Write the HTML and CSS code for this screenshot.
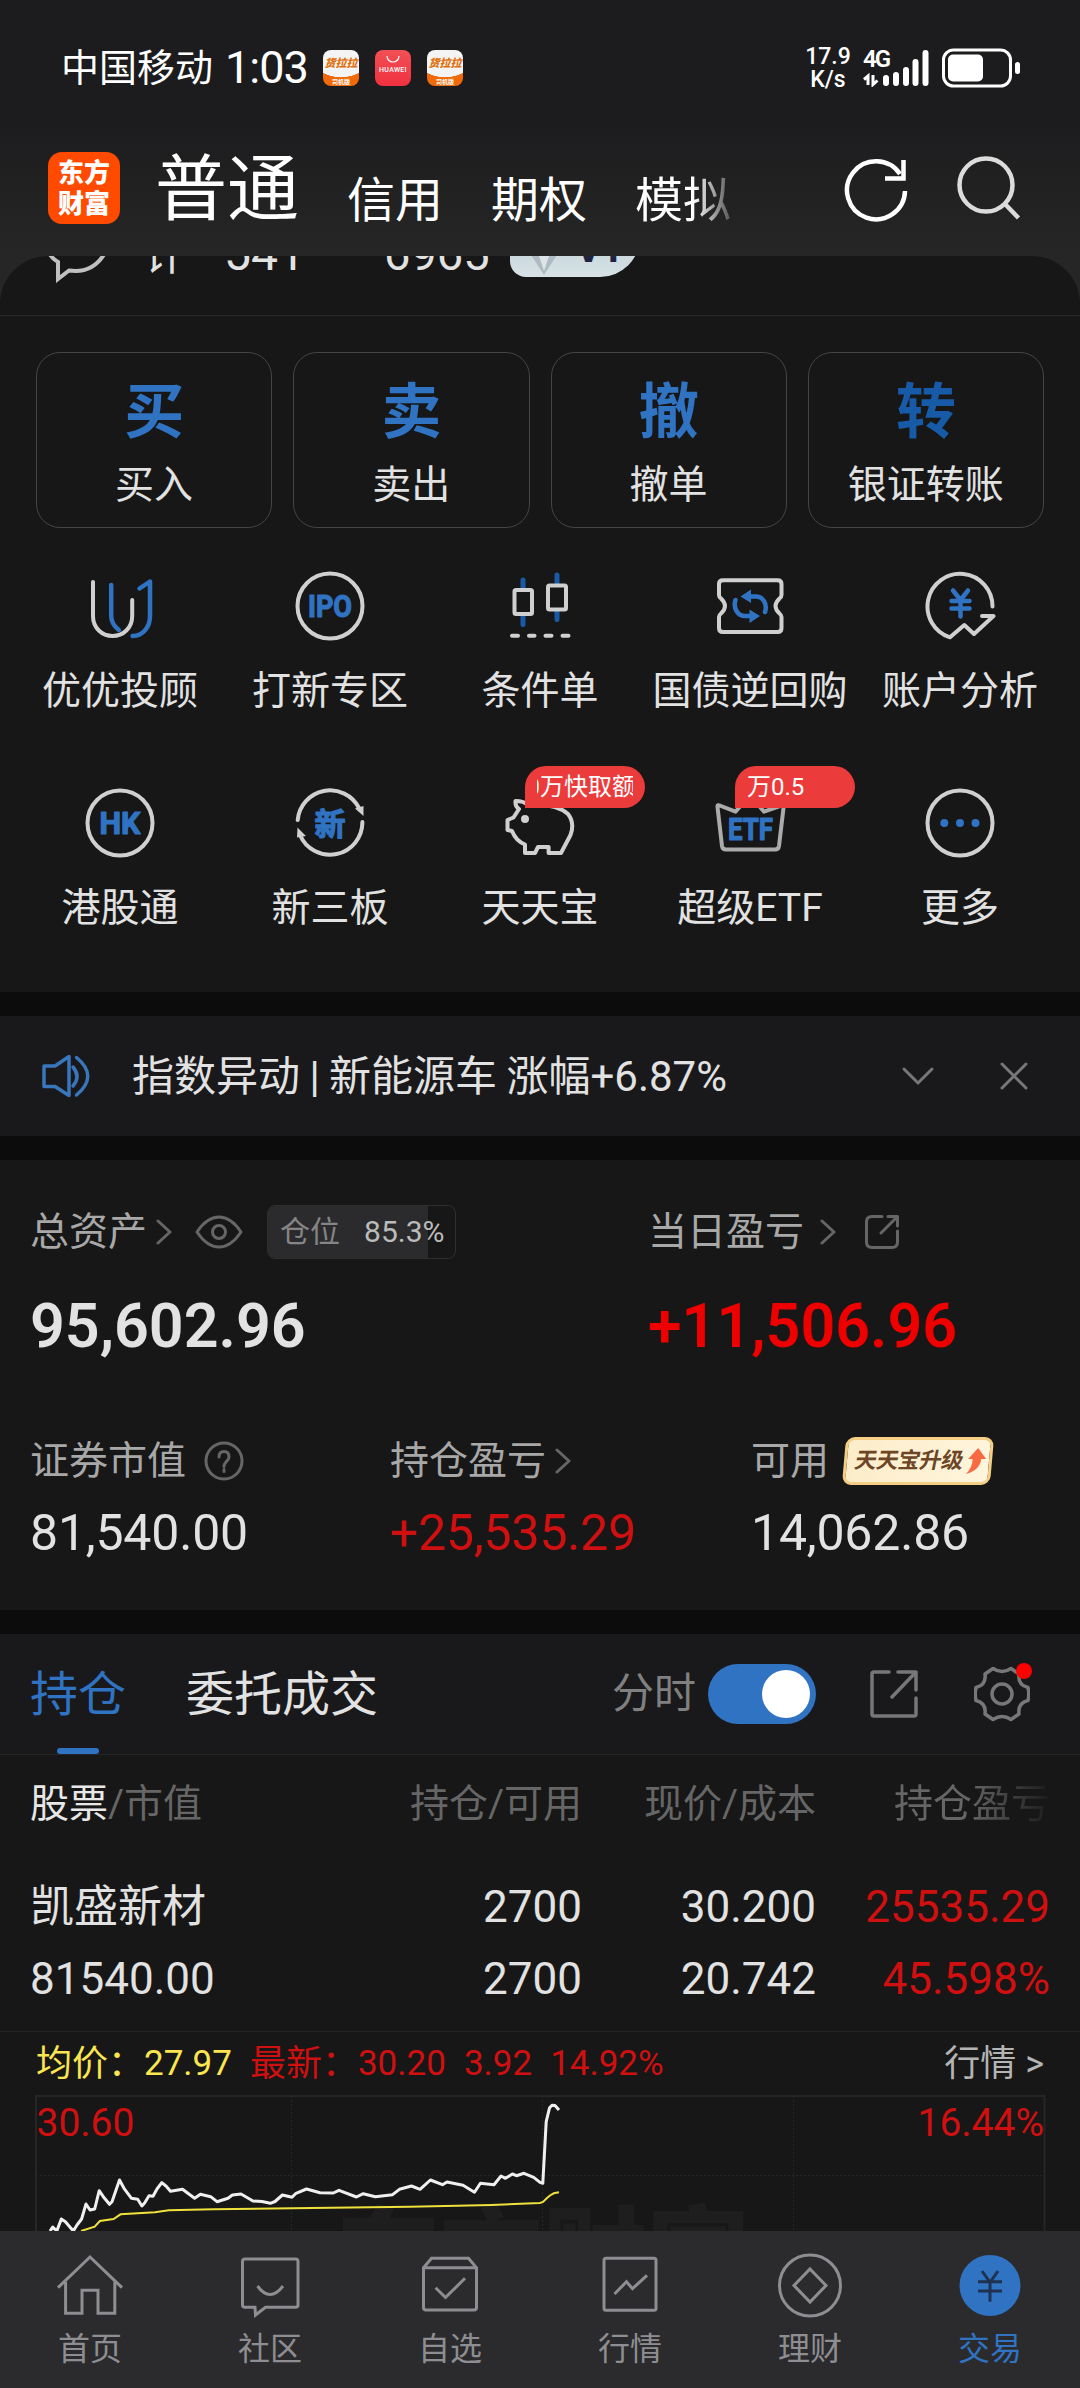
FILE: index.html
```html
<!DOCTYPE html>
<html lang="zh-CN">
<head>
    <meta charset="UTF-8">
    <meta name="viewport" content="width=device-width, initial-scale=1.0">
    <title>交易</title>
    <link rel="stylesheet" href="styles.css">
</head>
<body>
    <div class="page">
        <header class="header">
            <div class="status">
                <span class="carrier">中国移动</span>
                <span class="clock">1:03</span>
                <div class="app app-hll"><b>货拉拉</b><i>司机版</i></div>
                <div class="app app-hw">
                    <svg width="16" height="9" viewBox="0 0 16 9"><path d="M2 1a6 6 0 0 0 12 0" fill="none" stroke="#fff" stroke-width="1.2"/></svg>
                    <span>HUAWEI</span>
                </div>
                <div class="app app-hll"><b>货拉拉</b><i>司机版</i></div>
                <div class="speed"><span>17.9</span><span>K/s</span></div>
                <div class="signal">
                    <span>4G</span>
                    <svg width="66" height="38" viewBox="0 0 66 38" fill="none" stroke="#fff" stroke-linecap="round">
                        <path d="M5 36V27L1 30.500M10 26v9.500L14.500 31.500" stroke-width="3" stroke-linecap="butt"/>
                        <path d="M23 29v5M33 26v8M43 21v13M52.500 13v21M62.500 4v30" stroke-width="6"/>
                    </svg>
                </div>
                <svg class="battery" width="80" height="40" viewBox="0 0 80 40">
                    <rect x="1.500" y="2" width="67" height="36" rx="10" fill="none" stroke="#fff" stroke-width="3"/>
                    <rect x="6" y="6.500" width="35" height="27" rx="5" fill="#fff"/>
                    <rect x="73" y="14" width="5" height="12" rx="2.500" fill="#fff"/>
                </svg>
            </div>
            <div class="nav">
                <div class="logo">东方<br>财富</div>
                <div class="nav-tabs">
                    <span class="nav-tab active">普通</span>
                    <span class="nav-tab">信用</span>
                    <span class="nav-tab">期权</span>
                    <span class="nav-tab fade">模拟</span>
                </div>
                <svg class="refresh" width="68" height="68" viewBox="0 0 68 68" fill="none" stroke="#fff" stroke-width="4.500">
                    <path d="M63 36A29 29 0 1 1 58 19"/>
                    <path d="M61.500 5V23.500H43"/>
                </svg>
                <svg class="search" width="68" height="68" viewBox="0 0 68 68" fill="none" stroke="#dcdcdc" stroke-width="4.500">
                    <circle cx="31" cy="30" r="26.500"/>
                    <path d="M50 49L63.500 63"/>
                </svg>
            </div>
        </header>

        <section class="panel">
            <div class="account">
                <svg class="bubble" width="64" height="40" viewBox="0 0 64 40" fill="none" stroke="#c0c0c0" stroke-width="4">
                    <path d="M2 8q3 7 10 11V36L23 27.500Q48 31 60 8"/>
                </svg>
                <span class="acc-name">计</span>
                <span class="acc-no">541</span>
                <span class="acc-no2">6965</span>
                <div class="vip">
                    <svg width="40" height="30" viewBox="0 0 40 30"><path d="M2 0h36L20 28z" fill="#aebbc2"/><path d="M12 0h16l-8 24z" fill="#dce4e8"/></svg>
                    <span>V1</span>
                </div>
            </div>

            <div class="cards">
                <div class="card"><b>买</b><span>买入</span></div>
                <div class="card"><b>卖</b><span>卖出</span></div>
                <div class="card"><b>撤</b><span>撤单</span></div>
                <div class="card card-deep"><b>转</b><span>银证转账</span></div>
            </div>

            <div class="menu">
                <div class="menu-item">
                    <svg class="ico" viewBox="0 0 72 72">
                        <path d="M9 12V46C9 58 18 66 28.600 66S48.200 58 48.200 46V30"/>
                        <path class="blue" d="M27.200 15V46q0 8 7.600 14M55.500 18.500L66 11.500V46C66 57 59 66 48.600 66"/>
                    </svg>
                    <span>优优投顾</span>
                </div>
                <div class="menu-item">
                    <svg class="ico" viewBox="0 0 72 72">
                        <circle cx="36" cy="36" r="32.500"/>
                        <text class="ico-text" x="36" y="47" textLength="44" lengthAdjust="spacingAndGlyphs">IPO</text>
                    </svg>
                    <span>打新专区</span>
                </div>
                <div class="menu-item">
                    <svg class="ico" viewBox="0 0 72 72">
                        <path class="deep" d="M19 10v8M19 46v8.500M53 5v8M53 41v8.500"/>
                        <rect x="10.500" y="20" width="17.500" height="24" rx="1.500"/>
                        <rect x="44" y="15.500" width="18" height="24" rx="1.500"/>
                        <path d="M8 65.700h6M25 65.700h5.500M41.500 65.700h6M58.500 65.700h6"/>
                    </svg>
                    <span>条件单</span>
                </div>
                <div class="menu-item">
                    <svg class="ico" viewBox="0 0 72 72">
                        <path d="M9 10.300H63.500Q67.500 10.300 67.500 14V25Q67.500 27 65.500 28.500Q57.500 36 65.500 43.500Q67.500 45 67.500 47V58Q67.500 62 63.500 62H9Q5 62 5 58V47Q5 45 7 43.500Q15 36 7 28.500Q5 27 5 25V14Q5 10.300 9 10.300z"/>
                        <path class="blue" d="M51 42Q53 36 50 31Q47 26.500 42 26.500H36M21.500 30Q19.500 36 22.500 41Q25.500 46 31 46H36"/>
                        <path class="blue-fill" d="M26.500 26.500L37 19.500V33zM46 46L35.500 39.500V53z"/>
                    </svg>
                    <span>国债逆回购</span>
                </div>
                <div class="menu-item">
                    <svg class="ico" viewBox="0 0 72 72">
                        <path d="M68.500 36.500A32.500 32.500 0 1 0 26 67.300L40.300 55L50 64L69.500 46H58"/>
                        <path class="blue" d="M29 20.500L36.500 30L44 20.500M36.500 30V46.500M27.500 31H45.500M27.500 38.500H45.500"/>
                    </svg>
                    <span>账户分析</span>
                </div>
                <div class="menu-item">
                    <svg class="ico" viewBox="0 0 72 72">
                        <circle cx="36" cy="36" r="32.500"/>
                        <text class="ico-text" x="36" y="47" textLength="41" lengthAdjust="spacingAndGlyphs">HK</text>
                    </svg>
                    <span>港股通</span>
                </div>
                <div class="menu-item">
                    <svg class="ico" viewBox="0 0 72 72">
                        <path d="M3.700 33A32.500 32.500 0 0 1 65 21M68.400 35A32.500 32.500 0 0 1 6 48"/>
                        <path class="light-fill" d="M61 21.500L69.500 19V29zM3.500 40.500L12 49L3 50.500z"/>
                        <text class="ico-text ico-cjk" x="36" y="47.500">新</text>
                    </svg>
                    <span>新三板</span>
                </div>
                <div class="menu-item">
                    <svg class="ico" viewBox="0 0 72 72">
                        <path d="M24 18Q20 14 11.500 14Q11 20 15 22L9.500 30.500L3.500 33V43L8 44Q12 54 21 57.500V66H31L34 60H44.600V66H57L66.500 48Q71 36 64 27Q52 16 24 18z"/>
                        <circle class="light-fill" cx="21" cy="32" r="4"/>
                    </svg>
                    <span>天天宝</span>
                    <div class="badge badge-scroll"><em>10万快取额</em></div>
                </div>
                <div class="menu-item">
                    <svg class="ico ico-dim" viewBox="0 0 72 72">
                        <path d="M7 19L21.500 24.700L36 8L50 24.700L66 19Q70 17 69.500 21L65 59Q64.500 62.500 61 62.500H12Q8.500 62.500 8 59L3.500 20Q3 17 7 19z"/>
                        <text class="ico-text" x="36.500" y="53" textLength="45" lengthAdjust="spacingAndGlyphs">ETF</text>
                    </svg>
                    <span>超级ETF</span>
                    <div class="badge"><em>万0.5</em></div>
                </div>
                <div class="menu-item">
                    <svg class="ico" viewBox="0 0 72 72">
                        <circle cx="36" cy="36" r="32.500"/>
                        <path class="blue-fill" d="M16.300 36a4 4 0 1 0 8 0a4 4 0 1 0-8 0M32 36a4 4 0 1 0 8 0a4 4 0 1 0-8 0M47.500 36a4 4 0 1 0 8 0a4 4 0 1 0-8 0"/>
                    </svg>
                    <span>更多</span>
                </div>
            </div>
        </section>

        <section class="notice">
            <svg width="50" height="44" viewBox="0 0 50 44" fill="none" stroke="#3a76bb" stroke-width="3.500" stroke-linejoin="round" stroke-linecap="round">
                <path d="M2 12H13L27 2.500V41.500L13 32.500H2z"/>
                <path d="M31 13Q39 22.500 31 32M34.500 3.500Q57 22 34.500 41"/>
            </svg>
            <p>指数异动 | 新能源车 涨幅+6.87%</p>
            <svg class="notice-down" width="34" height="20" viewBox="0 0 34 20" fill="none" stroke="#777" stroke-width="3" stroke-linecap="round"><path d="M3 3L17 17L31 3"/></svg>
            <svg class="notice-close" width="30" height="30" viewBox="0 0 30 30" fill="none" stroke="#777" stroke-width="3" stroke-linecap="round"><path d="M3 3L27 27M27 3L3 27"/></svg>
        </section>

        <section class="assets">
            <div class="assets-top">
                <div>
                    <div class="label label-top">
                        <span>总资产</span>
                        <svg class="arrow" viewBox="0 0 16 28"><path d="M2 3L14 14L2 25"/></svg>
                        <svg class="eye" width="48" height="34" viewBox="0 0 48 34"><path d="M2 17Q12 2 24 2T46 17Q36 32 24 32T2 17z"/><circle cx="24" cy="17" r="6.500"/></svg>
                        <div class="ratio">
                            <div class="ratio-bar" style="width: 85.3%"></div>
                            <span>仓位</span><b>85.3%</b>
                        </div>
                    </div>
                    <div class="total">95,602.96</div>
                </div>
                <div>
                    <div class="label label-top">
                        <span>当日盈亏</span>
                        <svg class="arrow arrow-far" viewBox="0 0 16 28"><path d="M2 3L14 14L2 25"/></svg>
                        <svg class="share" width="36" height="36" viewBox="0 0 36 36"><path d="M18 2.500H8Q2.500 2.500 2.500 8V28Q2.500 33.500 8 33.500H28Q33.500 33.500 33.500 28V17M24 2.500H33.500V12M33.500 2.500L17 19"/></svg>
                    </div>
                    <div class="total up-bright">+11,506.96</div>
                </div>
            </div>
            <div class="assets-sub">
                <div>
                    <div class="label">
                        <span>证券市值</span>
                        <svg class="help" width="40" height="40" viewBox="0 0 40 40"><circle cx="20" cy="20" r="18"/><path d="M15 16Q15 10.500 20 10.500T25 16Q25 18.500 22 21Q20 23 20 25.500M20 28.500V30.500"/></svg>
                    </div>
                    <div class="value">81,540.00</div>
                </div>
                <div>
                    <div class="label">
                        <span>持仓盈亏</span>
                        <svg class="arrow" viewBox="0 0 16 28"><path d="M2 3L14 14L2 25"/></svg>
                    </div>
                    <div class="value up">+25,535.29</div>
                </div>
                <div>
                    <div class="label">
                        <span>可用</span>
                        <div class="tag">
                            <em>天天宝升级</em>
                            <svg width="20" height="26" viewBox="0 0 20 26"><path d="M11 0L20 11H15Q15 22 1 26Q7 20 6.500 11H2z" fill="#fa6a42"/></svg>
                        </div>
                    </div>
                    <div class="value">14,062.86</div>
                </div>
            </div>
        </section>

        <section class="holdings">
            <div class="tabs">
                <span class="tab active">持仓</span>
                <span class="tab">委托成交</span>
                <span class="switch-label">分时</span>
                <div class="switch"></div>
                <svg class="share2" width="48" height="48" viewBox="0 0 48 48"><path d="M19 2H4Q2 2 2 4V44Q2 46 4 46H44Q46 46 46 44V28M28 2H46V20M46 2L22 27"/></svg>
                <div class="gear">
                    <svg width="56" height="56" viewBox="-28 -28 56 56">
                        <path d="M-9-25.500Q0-19.500 9-25.500L17-20Q15.500-9 26-6.500Q27.500 0 26 6.500Q15.500 9 17 20L9 25.500Q0 19.500-9 25.500L-17 20Q-15.500 9-26 6.500Q-27.500 0-26-6.500Q-15.500-9-17-20z"/>
                        <circle r="10"/>
                    </svg>
                    <i class="dot"></i>
                </div>
            </div>
            <div class="row row-head">
                <span><b>股票</b>/市值</span>
                <span>持仓/可用</span>
                <span>现价/成本</span>
                <span class="fade-head">持仓盈亏</span>
            </div>
            <div class="stock">
                <div class="row">
                    <span>凯盛新材</span>
                    <span>2700</span>
                    <span>30.200</span>
                    <span class="up">25535.29</span>
                </div>
                <div class="row">
                    <span>81540.00</span>
                    <span>2700</span>
                    <span>20.742</span>
                    <span class="up">45.598%</span>
                </div>
            </div>
            <div class="quote">
                <span class="avg">均价：</span><span class="num avg">27.97</span>
                <span class="up">最新：</span><span class="num up">30.20</span>
                <span class="num up">3.92</span>
                <span class="num up">14.92%</span>
                <span class="more">行情 &gt;</span>
            </div>
            <svg class="chart" width="1080" height="137" viewBox="0 0 1080 137" fill="none">
                <text class="watermark" x="336" y="199" textLength="414">东方财富</text>
                <path class="frame" d="M36 137V1H1044.500V137"/>
                <path class="grid-line" d="M36 80.500H1044M291.500 1V137M542.500 1V137M793.500 1V137"/>
                <polyline class="avg-line" points="81,136 94.700,131.700 99.900,126 113.600,124 120.500,119.300 155,117.300 168.700,115.300 213.500,114.300 292,113.300 410,111.700 492,110 540,108 543,107 547,103 550,100.500 553.800,98.300 559,97.300"/>
                <polyline class="price-line" points="50,136 52.700,132 56.800,136 61.300,124 65.400,126.700 73.300,136 77,130 81.600,124 86,109 90,115 94.700,114 99.200,95.700 103.300,101.700 109.500,109.300 112,106.700 119.500,85 124,93.300 131.500,103.300 137.700,104.300 141.900,111 144.600,108 149,100.700 153,101.300 157,94 161.800,87.700 166,91 170.500,96.300 182.500,94.300 194.600,103.300 200.400,99.300 210.700,101.700 217,106.700 228,103.300 232.400,100 241,99 253,106 262,106.500 270.300,108.300 275,106.500 282.400,100 292,102.300 296,98.300 306.500,94 320,97.700 333.300,98 339,95.300 356.400,102 363.300,98.700 375.300,101.700 392.600,99.700 399.400,94.300 411.500,91 420,94.300 430.400,85 442.500,89.700 447,87 463,90.300 474.500,97.300 480.400,88.300 494,89.700 501,81 505.500,83.300 512.400,79 516.500,80.700 524,78.300 533.700,82.300 540,87.300 542.800,88.300 546.200,26.700 549.600,12.700 552,10.300 555,10.500 559,15"/>
                <text class="axis" x="36.500" y="41">30.60</text>
                <text class="axis" x="1044" y="41" text-anchor="end">16.44%</text>
            </svg>
        </section>

        <nav class="tabbar">
            <div class="tabbar-item">
                <svg viewBox="0 0 72 72"><path d="M4 37.700L36 7L68 37.700M11.600 32V63.300H28V40.300H44V63.300H60.800V32"/></svg>
                <span>首页</span>
            </div>
            <div class="tabbar-item">
                <svg viewBox="0 0 72 72"><path d="M11 9H61.500Q64 9 64 11.500V55Q64 57.300 61.500 57.300H31.500L21.500 65L21 57.300H11Q8.500 57.300 8.500 55V11.500Q8.500 9 11 9zM23.500 36Q36 53 49 36"/></svg>
                <span>社区</span>
            </div>
            <div class="tabbar-item">
                <svg viewBox="0 0 72 72"><path d="M9.500 17.700L17.500 8.300H54.500L62.500 17.700V57.500Q62.500 60 60 60H12Q9.500 60 9.500 57.500zH62.500M21.600 37.700L31.500 47.500L51 28.300"/></svg>
                <span>自选</span>
            </div>
            <div class="tabbar-item">
                <svg viewBox="0 0 72 72"><rect x="10" y="8.300" width="52" height="52" rx="2"/><path d="M20.500 44L32.500 31.700L38.500 38.700L53 25.300"/></svg>
                <span>行情</span>
            </div>
            <div class="tabbar-item">
                <svg viewBox="0 0 72 72"><circle cx="36" cy="35.500" r="30.500"/><path d="M36 19L52 35.500L36 52L20 35.500z"/></svg>
                <span>理财</span>
            </div>
            <div class="tabbar-item current">
                <svg viewBox="0 0 72 72"><circle cx="36" cy="35.500" r="30.500"/><path d="M28 21L36 32.300L44 21M36 32V51.700M24 31.700H48M24 41H48"/></svg>
                <span>交易</span>
            </div>
        </nav>
    </div>
</body>
</html>
```

FILE: styles.css
```css
* {
    box-sizing: border-box;
}
body {
    margin: 0;
    background: #0c0c0c;
    color: #e2e2e2;
    font-family: Roboto, "Noto Sans CJK SC", sans-serif;
    font-weight: 400;
}
svg {
    display: block;
    flex: none;
}
em, i {
    font-style: normal;
}
p {
    margin: 0;
}
.page {
    width: 1080px;
    height: 2388px;
    display: flex;
    flex-direction: column;
    overflow: hidden;
    background: #0c0c0c;
}
.up {
    color: #d01010;
}

/* header */
.header {
    height: 256px;
    color: #fff;
    background: linear-gradient(#1c1c1e 45%, #262626);
}
.status {
    display: flex;
    align-items: center;
    height: 136px;
    padding-left: 61px;
}
.carrier {
    font-size: 38px;
    line-height: 48px;
    width: 164px;
    white-space: nowrap;
}
.clock {
    font-size: 45px;
    line-height: 48px;
    letter-spacing: -1px;
    width: 98px;
}
.app {
    display: flex;
    flex-direction: column;
    align-items: center;
    justify-content: space-between;
    width: 36px;
    height: 36px;
    margin-right: 16px;
    border-radius: 8px;
    overflow: hidden;
    white-space: nowrap;
}
.app-hll {
    background: radial-gradient(ellipse 30px 22px at 50% 15%, #f4f4f4 98%, #f06a0a 100%);
}
.app-hll b {
    margin-top: 6px;
    font-size: 11px;
    line-height: 16px;
    font-weight: 900;
    font-style: italic;
    color: #e0700f;
}
.app-hll i {
    font-size: 6px;
    line-height: 9px;
    font-weight: 700;
}
.app-hw {
    justify-content: flex-start;
    padding-top: 5px;
    background: linear-gradient(#f25055, #f0303e);
}
.app-hw span {
    margin-top: 2px;
    font-size: 7px;
    line-height: 9px;
    font-weight: 500;
    letter-spacing: .3px;
}
.speed {
    display: flex;
    flex-direction: column;
    align-items: center;
    width: 44px;
    margin-left: 327px;
    font-size: 23px;
    line-height: 23px;
    font-weight: 500;
}
.signal {
    position: relative;
    width: 66px;
    margin-left: 13px;
}
.signal span {
    position: absolute;
    left: 0;
    top: -2px;
    font-size: 24px;
    line-height: 24px;
    font-weight: 600;
    letter-spacing: -2px;
}
.battery {
    margin-left: 13px;
}
.nav {
    display: flex;
    height: 120px;
    padding-left: 48px;
}
.logo {
    width: 72px;
    height: 72px;
    margin-top: 16px;
    padding-top: 6px;
    border-radius: 14px;
    background: #ff4a00;
    font-size: 26px;
    line-height: 31px;
    font-weight: 800;
    text-align: center;
}
.nav-tabs {
    display: flex;
    align-items: flex-end;
    align-self: flex-start;
    width: 692px;
    margin-left: 36px;
    padding-top: 12px;
}
.nav-tab {
    margin-left: 48px;
    font-size: 48px;
    line-height: 62px;
}
.nav-tab.active {
    margin-left: -1px;
    font-size: 72px;
    line-height: 84px;
}
.nav-tab.fade {
    background: linear-gradient(90deg, #fff 60%, #555);
    -webkit-background-clip: text;
    background-clip: text;
    color: transparent;
}
.refresh {
    margin-top: 19px;
    margin-left: -6px;
}
.search {
    margin-top: 19px;
    margin-left: 45px;
}

/* top panel */
.panel {
    height: 736px;
    background: linear-gradient(#171717, #171717) 0 50px no-repeat, #262626;
}
.account {
    display: flex;
    align-items: flex-end;
    height: 60px;
    padding-left: 46px;
    background: #171717;
    border-radius: 48px 48px 0 0;
    border-bottom: 1px solid #2a2a2a;
    overflow: hidden;
    font-size: 48px;
    line-height: 60px;
}
.bubble {
    margin-bottom: 32px;
}
.acc-name {
    width: 80px;
    margin-left: 34px;
    margin-bottom: 29px;
    font-size: 42px;
}
.acc-no, .acc-no2 {
    width: 160px;
    margin-bottom: 31px;
}
.acc-no2 {
    width: 126px;
    font-size: 47px;
}
.vip {
    display: flex;
    align-items: flex-end;
    width: 130px;
    height: 60px;
    margin-bottom: 38px;
    border-radius: 12px 12px 40px 16px;
    background: linear-gradient(#b9c9d0, #d6e2e6);
    color: #1d2340;
    font-size: 38px;
    font-weight: 800;
    line-height: 60px;
}
.vip svg {
    margin-left: 14px;
}
.vip span {
    margin-left: 12px;
    margin-bottom: -2px;
}
.cards {
    display: grid;
    grid-template-columns: repeat(4, 1fr);
    gap: 21px;
    padding: 36px 36px 0;
}
.card {
    display: flex;
    flex-direction: column;
    align-items: center;
    height: 176px;
    border: 1px solid #454545;
    border-radius: 24px;
    font-size: 39px;
    line-height: 48px;
}
.card b {
    height: 72px;
    margin: 24px 0 12px;
    font-size: 60px;
    line-height: 72px;
    font-weight: 600;
    color: #2f73c2;
}
.card-deep b {
    color: #175ba8;
}
.menu {
    display: grid;
    grid-template-columns: repeat(5, 210px);
    row-gap: 72px;
    padding: 42px 15px 0;
}
.menu-item {
    position: relative;
    display: flex;
    flex-direction: column;
    align-items: center;
    gap: 25px;
    font-size: 39px;
    line-height: 48px;
    white-space: nowrap;
}
.ico {
    width: 72px;
    height: 72px;
    fill: none;
    stroke: #d0d0d0;
    stroke-width: 4;
    stroke-linecap: round;
    stroke-linejoin: round;
}
.ico-dim {
    stroke: #ababab;
}
.ico .blue {
    stroke: #2f73c2;
    stroke-width: 4.5;
}
.ico .deep {
    stroke: #175ba8;
    stroke-width: 5;
}
.ico .blue-fill {
    fill: #2f73c2;
    stroke: none;
}
.ico .light-fill {
    fill: #d0d0d0;
    stroke: none;
}
.ico-text {
    fill: #2f73c2;
    stroke: #2f73c2;
    stroke-width: 1.2;
    font-size: 31px;
    font-weight: 700;
    text-anchor: middle;
}
.ico-cjk {
    font-size: 31px;
}
.badge {
    position: absolute;
    left: 90px;
    top: -21px;
    width: 120px;
    height: 42px;
    padding: 0 12px;
    border-radius: 21px 21px 21px 0;
    background: #eb3b3b;
    color: #fff;
    font-size: 24px;
    line-height: 42px;
}
.badge em {
    display: block;
    overflow: hidden;
}
.badge-scroll em {
    text-indent: -24px;
}

/* notice */
.notice {
    display: flex;
    align-items: center;
    height: 120px;
    margin-top: 24px;
    padding-left: 42px;
    background: #19191b;
    font-size: 42px;
}
.notice p {
    width: 769px;
    margin-left: 40px;
    padding-top: 2px;
    line-height: 48px;
    word-spacing: -1px;
}
.notice-close {
    margin-left: 64px;
}

/* assets */
.assets {
    height: 450px;
    margin-top: 24px;
    padding: 45px 30px 0;
    background: #171717;
}
.assets-top {
    display: grid;
    grid-template-columns: 618px 1fr;
}
.assets-sub {
    display: grid;
    grid-template-columns: 360px 361px 1fr;
    margin-top: 82px;
}
.label {
    display: flex;
    align-items: center;
    height: 48px;
    font-size: 39px;
    line-height: 46px;
    color: #a8a8a8;
}
.label-top {
    height: 54px;
}
.label svg {
    fill: none;
    stroke: #666;
    stroke-width: 3;
    stroke-linecap: round;
    stroke-linejoin: round;
}
.label .arrow {
    width: 16px;
    height: 28px;
    margin-left: 9px;
}
.label .arrow-far {
    margin-left: 16px;
}
.label .eye {
    margin-left: 23px;
}
.label .share {
    margin-left: 28px;
}
.label .help {
    margin-left: 18px;
}
.label .tag svg {
    stroke: none;
}
.ratio {
    position: relative;
    display: flex;
    align-items: center;
    width: 189px;
    height: 54px;
    margin-left: 24px;
    padding-left: 12px;
    border: 1px solid #2e2e30;
    border-radius: 8px;
    overflow: hidden;
    font-size: 30px;
}
.ratio-bar {
    position: absolute;
    left: 0;
    top: 0;
    height: 100%;
    background: #2b2b2d;
}
.ratio span, .ratio b {
    position: relative;
    font-weight: 400;
}
.ratio span {
    color: #858585;
}
.ratio b {
    margin-left: 24px;
    color: #bbb;
}
.total {
    margin-top: 37px;
    font-size: 61px;
    line-height: 60px;
    font-weight: 600;
}
.up-bright {
    color: #ee0000;
}
.value {
    margin-top: 18px;
    font-size: 50px;
    line-height: 61px;
    letter-spacing: -.2px;
}
.value.up {
    color: #d01010;
}
.assets-sub {
    margin-top: 81px;
}
.tag {
    display: flex;
    align-items: center;
    width: 148px;
    height: 48px;
    margin-left: 15px;
    padding-left: 8px;
    border: 3px solid #f3ce84;
    border-radius: 9px;
    background: linear-gradient(90deg, #fcedca, #fff5dc);
    transform: skewX(-5deg);
}
.tag em {
    width: 108px;
    margin-right: 3px;
    font-size: 22px;
    line-height: 42px;
    letter-spacing: -.4px;
    font-weight: 700;
    color: #6d4626;
    transform: skewX(-7deg);
}

/* holdings */
.holdings {
    height: 597px;
    margin-top: 24px;
    background: #171717;
    overflow: hidden;
}
.tabs {
    display: flex;
    align-items: center;
    height: 121px;
    padding-left: 30px;
    background: #19191b;
    border-bottom: 1px solid #262626;
    font-size: 48px;
}
.tab {
    position: relative;
    height: 120px;
    margin-right: 60px;
    line-height: 122px;
}
.tab.active {
    color: #2f73c2;
}
.tab.active::after {
    content: "";
    position: absolute;
    left: 27px;
    bottom: 0;
    width: 42px;
    height: 6px;
    border-radius: 3px;
    background: #2f73c2;
}
.switch-label {
    width: 96px;
    margin-left: 174px;
    font-size: 42px;
    line-height: 48px;
    color: #808080;
}
.switch {
    display: flex;
    justify-content: flex-end;
    width: 108px;
    height: 60px;
    padding: 6px;
    border-radius: 30px;
    background: #2f73c2;
}
.switch::after {
    content: "";
    width: 48px;
    height: 48px;
    border-radius: 50%;
    background: #fff;
}
.share2, .gear svg {
    fill: none;
    stroke: #777;
    stroke-width: 3.5;
    stroke-linejoin: round;
    stroke-linecap: round;
}
.share2 {
    margin-left: 54px;
}
.gear {
    position: relative;
    margin-left: 56px;
}
.dot {
    position: absolute;
    right: -2px;
    top: -3px;
    width: 16px;
    height: 16px;
    border-radius: 50%;
    background: #f00;
}
.row {
    display: grid;
    grid-template-columns: 270px 282px 234px 234px;
    padding: 0 30px;
    font-size: 44px;
    line-height: 72px;
}
.row span + span {
    text-align: right;
}
.row-head {
    height: 96px;
    font-size: 39px;
    line-height: 98px;
    color: #666;
}
.row-head b {
    font-weight: 400;
    color: #e8e8e8;
}
.row-head .fade-head {
    background: linear-gradient(90deg, #666 65%, #1c1c1c);
    -webkit-background-clip: text;
    background-clip: text;
    color: transparent;
}
.stock {
    padding: 20px 0 16px;
    border-bottom: 1px solid #262626;
}
.quote {
    display: flex;
    align-items: center;
    height: 63px;
    padding: 0 36px;
    font-size: 36px;
    line-height: 44px;
}
.avg {
    color: #fae650;
}
.quote .num {
    margin-right: 18px;
    font-size: 35px;
}
.more {
    margin-left: auto;
    color: #b4b4b4;
}
.frame {
    stroke: #262626;
    stroke-width: 2;
}
.grid-line {
    stroke: #262626;
    stroke-dasharray: 2 2;
}
.avg-line {
    stroke: #efe13c;
    stroke-width: 2;
}
.price-line {
    stroke: #f0f0f0;
    stroke-width: 3;
    stroke-linejoin: round;
}
.axis {
    fill: #d01010;
    font-size: 39px;
}
.watermark {
    fill: #1e1e1e;
    font-size: 104px;
    font-weight: 900;
}

/* bottom tab bar */
.tabbar {
    display: grid;
    grid-template-columns: repeat(6, 1fr);
    flex: 1;
    padding-top: 19px;
    background: #2b2b2d;
    color: #8e8e92;
}
.tabbar-item {
    display: flex;
    flex-direction: column;
    align-items: center;
    gap: 7px;
    font-size: 32px;
    line-height: 40px;
}
.tabbar-item svg {
    width: 72px;
    height: 72px;
    fill: none;
    stroke: #8e8e92;
    stroke-width: 3;
}
.tabbar-item.current {
    color: #2f73c2;
}
.tabbar-item.current svg {
    stroke: #1f3350;
}
.tabbar-item.current circle {
    fill: #2f73c2;
    stroke: none;
}
```
